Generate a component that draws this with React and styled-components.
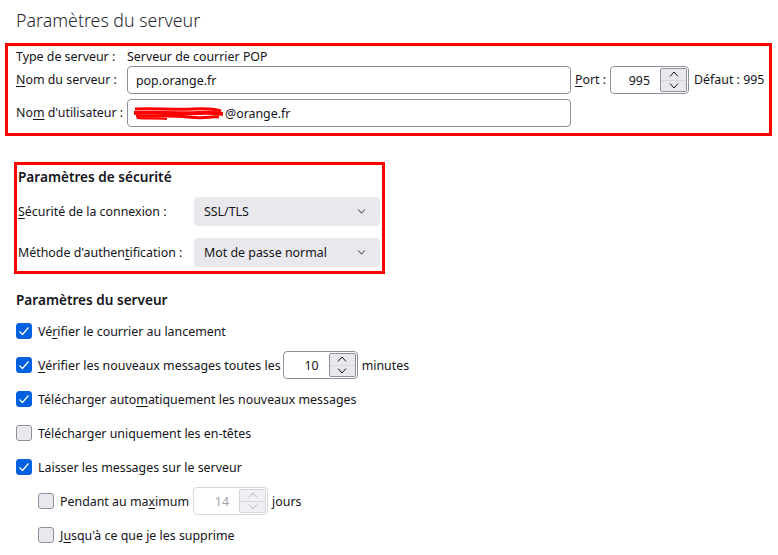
import React from "react";
import styled, { createGlobalStyle } from "styled-components";

const Global = createGlobalStyle`
  html, body { margin: 0; padding: 0; background: #fff; }
  body {
    font-family: "Noto Sans", "Liberation Sans", sans-serif;
    font-size: 12.4px;
    color: #15141a;
  }
`;

const Page = styled.div`
  width: 778px;
  height: 555px;
  overflow: hidden;
  box-sizing: border-box;
  padding: 7px 0 0 16px;
  display: flex;
  flex-direction: column;
`;

const Title = styled.h1`
  margin: 0;
  font-size: 17.8px;
  font-weight: 300;
  line-height: 26px;
  color: #2b2a33;
`;

const Highlight = styled.section`
  box-sizing: border-box;
  border: 3px solid #ff0000;
  display: flex;
  flex-direction: column;
`;

const ServerBox = styled(Highlight)`
  margin: 10px 0 0 -11px;
  width: 767px;
  padding: 3px 0 6px 8px;
`;

const SecurityBox = styled(Highlight)`
  margin: 26px 0 0 -2px;
  width: 371px;
  padding: 2px 2px 4px 1px;
`;

const Row = styled.div`
  display: flex;
  align-items: center;
  gap: 4px;
  margin-top: ${(p) => p.$top || 0}px;
  height: ${(p) => p.$h}px;
`;

const Label = styled.span`
  white-space: nowrap;
  line-height: 16px;
  ${(p) => (p.$w ? `width: ${p.$w}px; flex: none;` : "")}
  ${(p) => (p.$gap ? `margin-left: ${p.$gap}px;` : "")}
`;

const Key = styled.u`
  text-decoration: underline;
  text-underline-offset: 2px;
`;

const TextField = styled.div`
  box-sizing: border-box;
  width: ${(p) => p.$w}px;
  height: 28px;
  border: 1px solid #8f8f9d;
  border-radius: 4px;
  display: flex;
  align-items: center;
  padding-left: 8px;
  white-space: nowrap;
  overflow: hidden;
`;

const Scribble = styled.svg`
  flex: none;
  margin-left: -3px;
`;

const SpinBox = styled.div`
  box-sizing: border-box;
  width: ${(p) => p.$w}px;
  height: 28px;
  border: 1px solid ${(p) => (p.$disabled ? "#d6d6dc" : "#8f8f9d")};
  border-radius: 4px;
  display: flex;
  align-items: stretch;
  padding: 1px;
  color: ${(p) => (p.$disabled ? "#a3a3a8" : "#15141a")};
`;

const SpinValue = styled.span`
  flex: 1;
  text-align: right;
  padding-right: 10px;
  align-self: center;
`;

const SpinButtons = styled.div`
  width: 25px;
  display: flex;
  flex-direction: column;
  border: 1px solid ${(p) => (p.$disabled ? "#d6d6dc" : "#8f8f9d")};
  border-radius: 2px;
  background: ${(p) => (p.$disabled ? "#f0f0f4" : "#e9e9ed")};
  overflow: hidden;
`;

const SpinHalf = styled.div`
  flex: 1;
  display: flex;
  align-items: center;
  justify-content: center;
  & + & { border-top: 1px solid ${(p) => (p.$disabled ? "#d6d6dc" : "#8f8f9d")}; }
`;

const Heading = styled.h2`
  margin: ${(p) => p.$top || 0}px 0 0;
  font-size: 13.6px;
  font-weight: 600;
  line-height: 20px;
`;

const Select = styled.div`
  box-sizing: border-box;
  width: 186px;
  height: 29px;
  border-radius: 4px;
  background: #e9e9ed;
  display: flex;
  align-items: center;
  justify-content: space-between;
  padding: 0 14px 0 10px;
`;

const OptionRows = styled.div`
  display: flex;
  flex-direction: column;
  margin-top: 4px;
`;

const CheckRow = styled.label`
  display: flex;
  align-items: center;
  gap: 6px;
  height: 34px;
  padding-left: ${(p) => (p.$indent ? 22 : 0)}px;
  white-space: nowrap;
`;

const Box = styled.span`
  box-sizing: border-box;
  width: 16px;
  height: 16px;
  border-radius: 3px;
  flex: none;
  display: flex;
  align-items: center;
  justify-content: center;
  background: ${(p) => (p.$on ? "#0061e0" : "#e9e9ed")};
  border: 1px solid ${(p) => (p.$on ? "#0061e0" : "#8f8f9d")};
`;

const Phrase = styled.span`
  margin-right: ${(p) => -(p.$pull || 0)}px;
`;

const After = styled.span`
  margin-left: -2px;
`;

function Chevron({ up, color = "#15141a", w = 10, h = 6 }) {
  return (
    <svg width={w} height={h} viewBox="0 0 10 6" fill="none">
      <path
        d={up ? "M1 5.5 L5 1 L9 5.5" : "M1 0.5 L5 5 L9 0.5"}
        stroke={color}
        strokeWidth="1"
      />
    </svg>
  );
}

function Spinner({ value, w, disabled }) {
  const c = disabled ? "#b8b8bd" : "#15141a";
  return (
    <SpinBox $w={w} $disabled={disabled}>
      <SpinValue>{value}</SpinValue>
      <SpinButtons $disabled={disabled}>
        <SpinHalf $disabled={disabled}>
          <Chevron up color={c} />
        </SpinHalf>
        <SpinHalf $disabled={disabled}>
          <Chevron color={c} />
        </SpinHalf>
      </SpinButtons>
    </SpinBox>
  );
}

function Check({ on, indent, children }) {
  return (
    <CheckRow $indent={indent}>
      <Box $on={on}>
        {on && (
          <svg width="14" height="14" viewBox="0 0 14 14" fill="none">
            <path d="M2.5 7.5 L5.5 10.5 L11.5 3.5" stroke="#fff" strokeWidth="1.2" />
          </svg>
        )}
      </Box>
      {children}
    </CheckRow>
  );
}

export default function App() {
  return (
    <>
      <Global />
      <Page>
        <Title>Paramètres du serveur</Title>

        <ServerBox>
          <Row $h={16}>
            <Label $w={107}>Type de serveur :</Label>
            <Label>Serveur de courrier POP</Label>
          </Row>
          <Row $h={28} $top={1}>
            <Label $w={107}>
              <Key>N</Key>om du serveur :
            </Label>
            <TextField $w={444}>pop.orange.fr</TextField>
            <Label $w={31}>
              <Key>P</Key>ort :
            </Label>
            <Spinner value="995" w={79} />
            <Label $gap={1}>Défaut : 995</Label>
          </Row>
          <Row $h={28} $top={5}>
            <Label $w={107}>
              No<Key>m</Key> d'utilisateur :
            </Label>
            <TextField $w={444}>
              <Scribble width="92" height="16" viewBox="0 0 92 16" fill="none">
                <path d="M2 4 C20 3 40 5 60 4 S85 5 88 6" stroke="#ff0000" strokeWidth="3" />
                <path d="M1 8 C25 7 45 9 65 8 S84 9 90 9" stroke="#ff0000" strokeWidth="4" />
                <path d="M3 11 C20 12 35 10 55 12 S75 11 86 12" stroke="#ff0000" strokeWidth="3" />
                <path d="M4 13 C14 14 24 13 34 14" stroke="#ff0000" strokeWidth="2" />
              </Scribble>
              @orange.fr
            </TextField>
          </Row>
        </ServerBox>

        <SecurityBox>
          <Heading>Paramètres de sécurité</Heading>
          <Row $h={29} $top={10}>
            <Label $w={172}>
              <Key>S</Key>écurité de la connexion :
            </Label>
            <Select>
              SSL/TLS
              <Chevron w={9} h={5} />
            </Select>
          </Row>
          <Row $h={29} $top={12}>
            <Label $w={172}>
              Méthode d'authen<Key>t</Key>ification :
            </Label>
            <Select>
              Mot de passe normal
              <Chevron w={9} h={5} />
            </Select>
          </Row>
        </SecurityBox>

        <Heading $top={16}>Paramètres du serveur</Heading>
        <OptionRows>
          <Check on>
            <span>
              Vé<Key>r</Key>ifier le courrier au lancement
            </span>
          </Check>
          <Check on>
            <Phrase $pull={4}>
              <Key>V</Key>érifier les nouveaux messages toutes les
            </Phrase>
            <Spinner value="10" w={75} />
            <After>minutes</After>
          </Check>
          <Check on>
            <span>
              Télécharger auto<Key>m</Key>atiquement les nouveaux messages
            </span>
          </Check>
          <Check>
            <span>
              Téléchar<Key>g</Key>er uniquement les en-têtes
            </span>
          </Check>
          <Check on>
            <span>
              Laisser les messa<Key>g</Key>es sur le serveur
            </span>
          </Check>
          <Check indent>
            <Phrase $pull={2}>
              Pendant au ma<Key>x</Key>imum
            </Phrase>
            <Spinner value="14" w={75} disabled />
            <After>jours</After>
          </Check>
          <Check indent>
            <span>
              J<Key>u</Key>squ'à ce que je les supprime
            </span>
          </Check>
        </OptionRows>
      </Page>
    </>
  );
}
